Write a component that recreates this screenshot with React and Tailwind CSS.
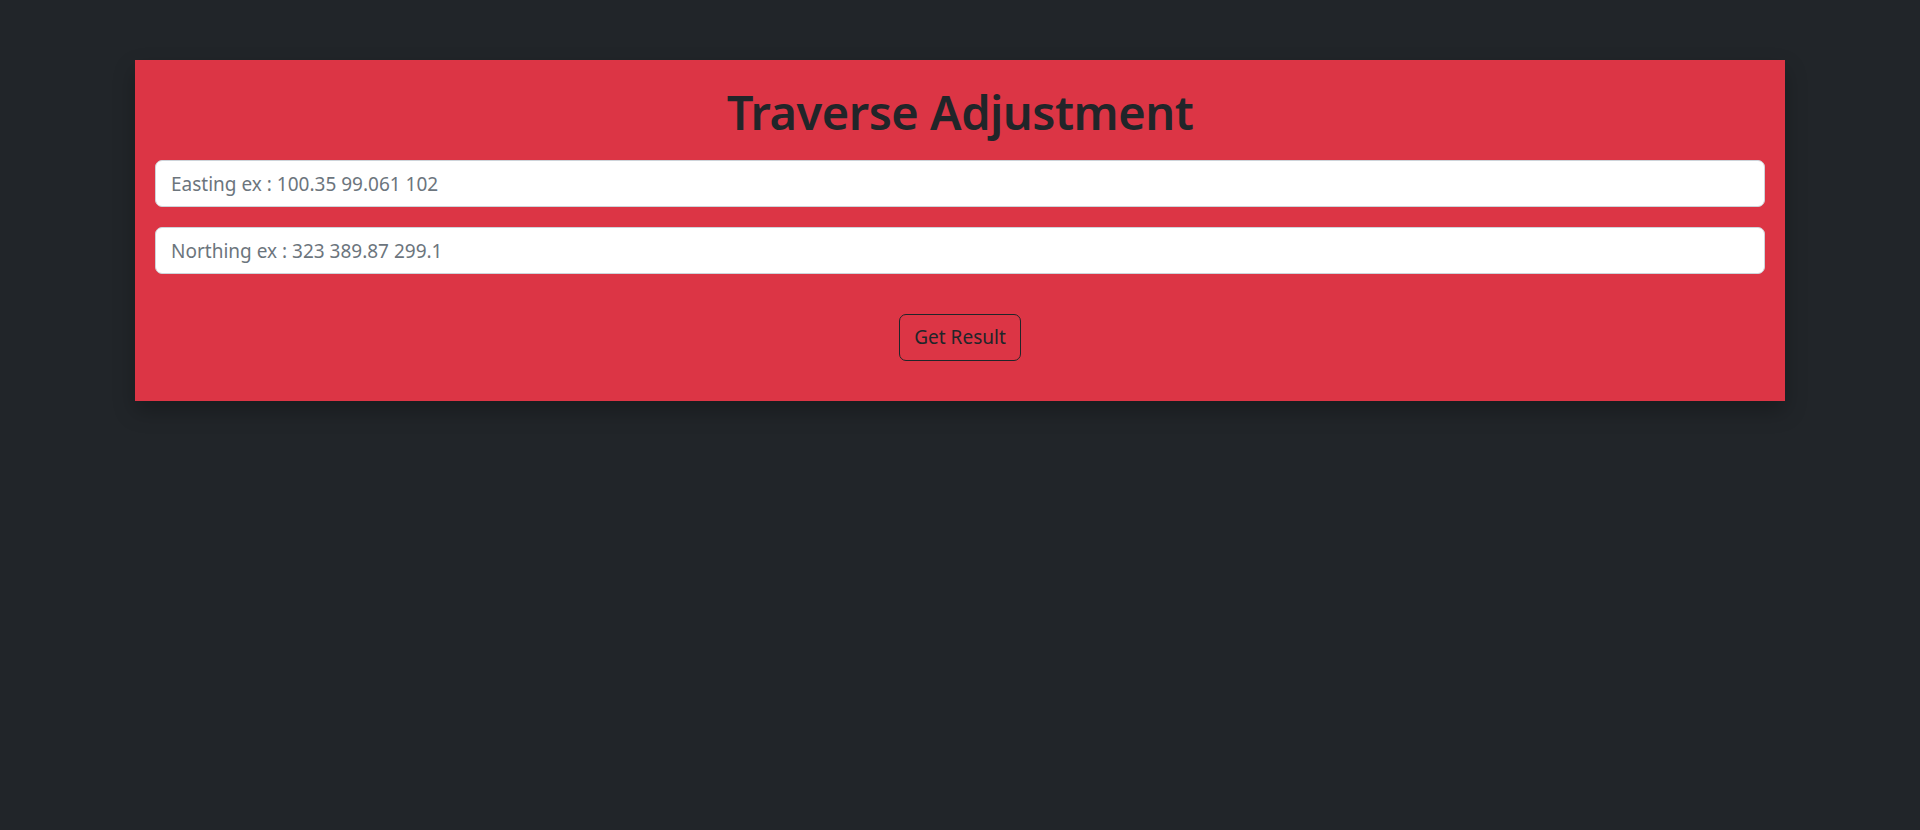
import React, { useState } from 'react';

export default function App() {
  const [easting, setEasting] = useState('');
  const [northing, setNorthing] = useState('');

  return (
    <div className="min-h-[830px] bg-[#212529] pt-[60px] font-['Noto_Sans',sans-serif]">
      <div className="mx-[135px] bg-[#dc3545] px-[20px] pt-[22px] pb-[40px] shadow-[0_10px_20px_rgba(0,0,0,0.25)]">
        <h1 className="mb-[18px] text-center text-[47px] leading-[60px] font-semibold tracking-[-0.5px] text-[#212529]">
          Traverse Adjustment
        </h1>
        <input
          value={easting}
          onChange={(e) => setEasting(e.target.value)}
          placeholder="Easting ex : 100.35 99.061 102"
          className="mb-[20px] block h-[47px] w-full rounded-[7px] border border-[#ced4da] bg-white px-[15px] text-[19px] text-[#212529] placeholder:text-[#6c757d] outline-none"
        />
        <input
          value={northing}
          onChange={(e) => setNorthing(e.target.value)}
          placeholder="Northing ex : 323 389.87 299.1"
          className="block h-[47px] w-full rounded-[7px] border border-[#ced4da] bg-white px-[15px] text-[19px] text-[#212529] placeholder:text-[#6c757d] outline-none"
        />
        <div className="mt-[40px] flex justify-center">
          <button className="h-[47px] w-[122px] rounded-[7px] border border-[#212529] text-[19px] text-[#212529]">
            Get Result
          </button>
        </div>
      </div>
    </div>
  );
}
